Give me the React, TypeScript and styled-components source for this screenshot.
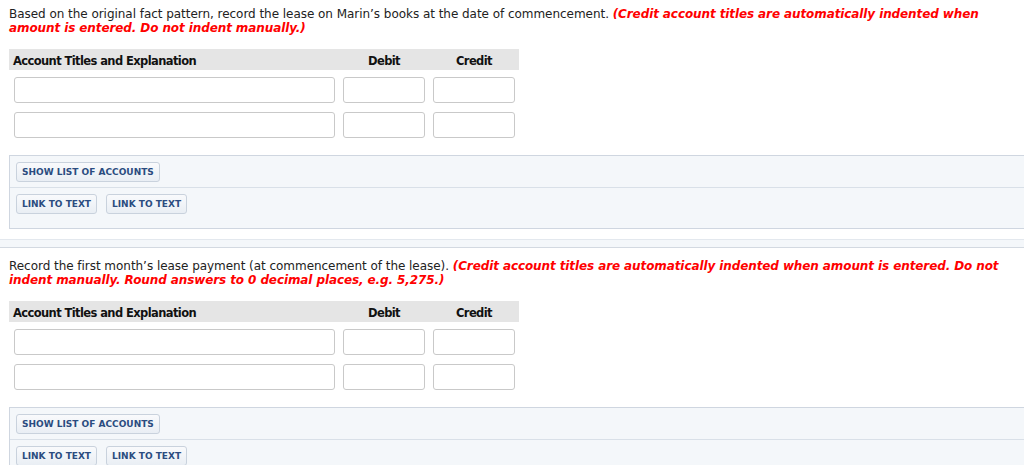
import React from "react";
import styled, { createGlobalStyle } from "styled-components";

const GlobalStyle = createGlobalStyle`
  html, body { margin: 0; padding: 0; background: #fff; }
  body { font-family: "DejaVu Sans", Verdana, sans-serif; font-size: 12px; color: #222; }
`;

const Page = styled.div`
  display: flex;
  flex-direction: column;
`;

const Section = styled.section`
  padding: 7px 0 0 9px;
  display: flex;
  flex-direction: column;
`;

const Prompt = styled.p`
  margin: 0 9px 14px 0;
  line-height: 14px;
  letter-spacing: -0.04px;
`;

const Note = styled.span`
  color: #f00;
  font-weight: bold;
  font-style: italic;
  letter-spacing: -0.1px;
`;

const Journal = styled.div`
  width: 510px;
  display: grid;
  grid-template-columns: 330px 90px 90px;
`;

const HeadCell = styled.div<{ $center?: boolean }>`
  box-sizing: border-box;
  background: #e5e5e5;
  height: 21px;
  padding-top: 2px;
  display: flex;
  align-items: center;
  justify-content: ${(p) => (p.$center ? "center" : "flex-start")};
  font-weight: bold;
  font-size: 11.5px;
  letter-spacing: -0.6px;
  color: #111;
  padding-left: ${(p) => (p.$center ? "0" : "4px")};
`;

const Cell = styled.div<{ $first?: boolean; $wide?: boolean }>`
  padding: ${(p) => (p.$first ? "7px" : "9px")} ${(p) => (p.$wide ? "4px 0 5px" : "4px 0 4px")};
  display: flex;
`;

const Field = styled.input`
  box-sizing: border-box;
  width: 100%;
  height: 26px;
  border: 1px solid #c9c9c9;
  border-radius: 3px;
  background: #fff;
  margin: 0;
  padding: 0 4px;
  font: inherit;
`;

const Panel = styled.div`
  margin-top: 17px;
  border: 1px solid #cfd6e0;
  border-right: none;
  background: #f4f7fa;
  display: flex;
  flex-direction: column;
`;

const PanelRow = styled.div<{ $last?: boolean }>`
  display: flex;
  gap: 9px;
  padding: 6px 6px ${(p) => (p.$last ? "14px" : "5px")};
  & + & { border-top: 1px solid #d9e0e8; }
`;

const Button = styled.button`
  box-sizing: border-box;
  height: 20px;
  padding: 0 5px;
  border: 1px solid #c9d2dd;
  border-radius: 3px;
  background: linear-gradient(#f9fafc, #e9eef4);
  color: #2b4c80;
  font-family: "DejaVu Sans", Verdana, sans-serif;
  font-size: 9px;
  font-weight: bold;
  letter-spacing: 0;
  cursor: pointer;
`;

const Band = styled.div`
  margin: 10px 0 4px;
  height: 7px;
  border-top: 1px solid #e3e8ee;
  border-bottom: 1px solid #d3d9e1;
  background: #f4f7fa;
`;

function Entry({ prompt, note }: { prompt: string; note: string }) {
  const rows = [0, 1];
  return (
    <Section>
      <Prompt>
        {prompt} <Note>{note}</Note>
      </Prompt>
      <Journal>
        <HeadCell>Account Titles and Explanation</HeadCell>
        <HeadCell $center>Debit</HeadCell>
        <HeadCell $center>Credit</HeadCell>
        {rows.map((r) => (
          <React.Fragment key={r}>
            <Cell $first={r === 0} $wide>
              <Field type="text" />
            </Cell>
            <Cell $first={r === 0}>
              <Field type="text" />
            </Cell>
            <Cell $first={r === 0}>
              <Field type="text" />
            </Cell>
          </React.Fragment>
        ))}
      </Journal>
      <Panel>
        <PanelRow>
          <Button>SHOW LIST OF ACCOUNTS</Button>
        </PanelRow>
        <PanelRow $last>
          <Button>LINK TO TEXT</Button>
          <Button>LINK TO TEXT</Button>
        </PanelRow>
      </Panel>
    </Section>
  );
}

export default function App() {
  return (
    <Page>
      <GlobalStyle />
      <Entry
        prompt="Based on the original fact pattern, record the lease on Marin’s books at the date of commencement."
        note="(Credit account titles are automatically indented when amount is entered. Do not indent manually.)"
      />
      <Band />
      <Entry
        prompt="Record the first month’s lease payment (at commencement of the lease)."
        note="(Credit account titles are automatically indented when amount is entered. Do not indent manually. Round answers to 0 decimal places, e.g. 5,275.)"
      />
    </Page>
  );
}
